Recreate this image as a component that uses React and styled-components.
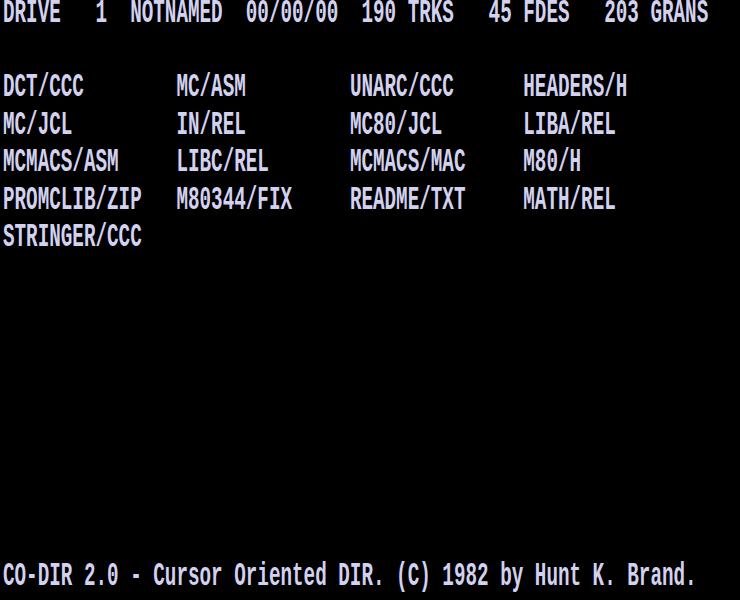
import React from 'react';
import styled, { createGlobalStyle } from 'styled-components';

const COLS = 64;
const CHAR_W = 740 / COLS;
const ROW_H = 37.5;

const GlobalStyle = createGlobalStyle`
  html, body {
    margin: 0;
    padding: 0;
    background: #000;
  }
`;

const Screen = styled.div`
  width: 740px;
  height: 600px;
  background: #000;
  overflow: hidden;
  display: grid;
  grid-template-rows: repeat(16, ${ROW_H}px);
  padding-left: 3px;
  box-sizing: border-box;
  font-family: "Liberation Mono", "DejaVu Sans Mono", monospace;
  font-size: ${CHAR_W / 0.6}px;
  font-weight: bold;
  color: #d2d2f0;
`;

const Line = styled.div`
  grid-row: ${(p) => p.$row};
  white-space: pre;
  line-height: ${ROW_H}px;
  height: ${ROW_H}px;
  transform: translateY(-4px) scaleY(1.72);
  transform-origin: center;
`;

const FileGrid = styled.div`
  grid-row: 3 / span 5;
  display: grid;
  grid-template-columns: repeat(4, ${CHAR_W * 15}px);
  grid-auto-rows: ${ROW_H}px;
`;

const FileName = styled.span`
  white-space: pre;
  line-height: ${ROW_H}px;
  transform: translateY(-5px) scaleY(1.72);
  transform-origin: center;
`;

const files = [
  'DCT/CCC', 'MC/ASM', 'UNARC/CCC', 'HEADERS/H',
  'MC/JCL', 'IN/REL', 'MC80/JCL', 'LIBA/REL',
  'MCMACS/ASM', 'LIBC/REL', 'MCMACS/MAC', 'M80/H',
  'PROMCLIB/ZIP', 'M80344/FIX', 'README/TXT', 'MATH/REL',
  'STRINGER/CCC',
];

export default function App() {
  return (
    <>
      <GlobalStyle />
      <Screen>
        <Line $row={1}>
          {'DRIVE   1  NOTNAMED  00/00/00  190 TRKS   45 FDES   203 GRANS'}
        </Line>
        <FileGrid>
          {files.map((f) => (
            <FileName key={f}>{f}</FileName>
          ))}
        </FileGrid>
        <Line $row={16}>
          {'CO-DIR 2.0 - Cursor Oriented DIR. (C) 1982 by Hunt K. Brand.'}
        </Line>
      </Screen>
    </>
  );
}
